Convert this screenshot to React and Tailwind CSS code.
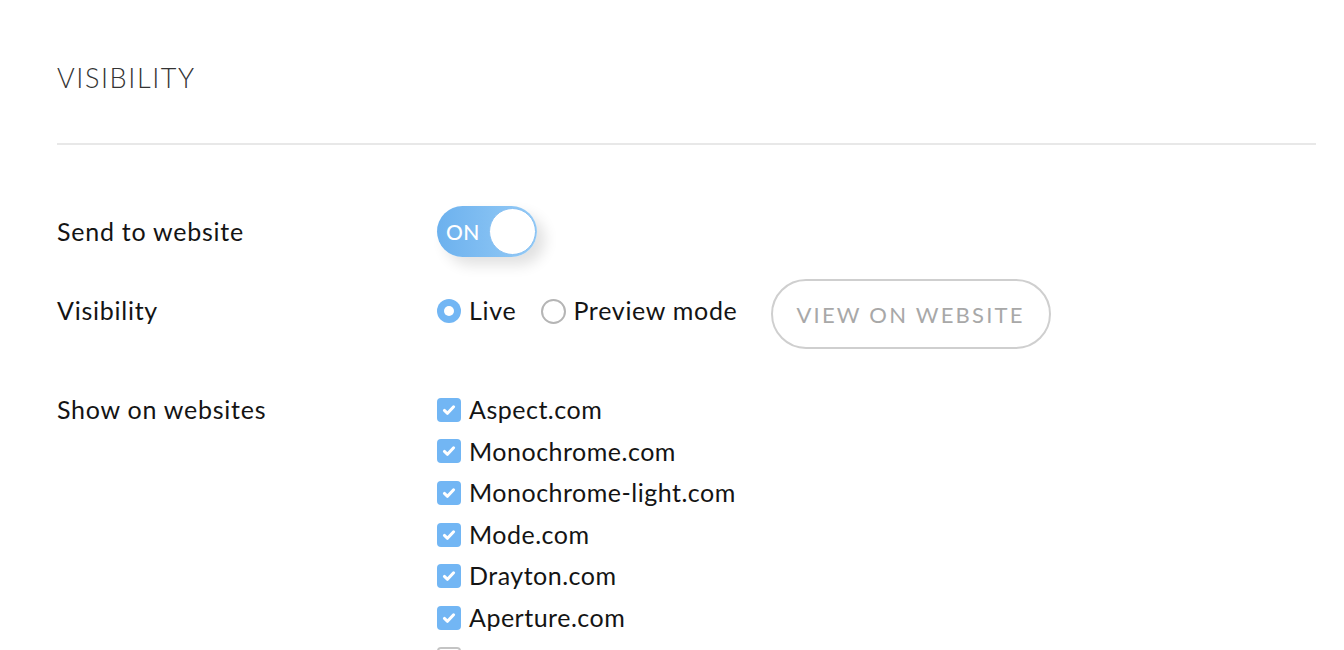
import React from "react";

const sites = [
  { name: "Aspect.com", checked: true },
  { name: "Monochrome.com", checked: true },
  { name: "Monochrome-light.com", checked: true },
  { name: "Mode.com", checked: true },
  { name: "Drayton.com", checked: true },
  { name: "Aperture.com", checked: true },
  { name: "Other.com", checked: false },
];

function Check({ checked }) {
  if (!checked)
    return <span className="w-[24px] h-[24px] rounded-[4px] border-2 border-[#c4c4c4] bg-white shrink-0" />;
  return (
    <span className="w-[24px] h-[24px] rounded-[4px] bg-[#72b6f4] shrink-0 flex items-center justify-center">
      <svg width="16" height="16" viewBox="0 0 16 16" fill="none">
        <path d="M3.4 8.4 L6.5 11.3 L12.6 4.8" stroke="white" strokeWidth="3" strokeLinecap="round" strokeLinejoin="round" />
      </svg>
    </span>
  );
}

export default function App() {
  return (
    <div className="w-[1344px] h-[650px] overflow-hidden bg-white text-[#141414]" style={{ fontFamily: "Lato, 'Noto Sans', sans-serif" }}>
      <div className="pl-[57px] pr-[28px]">
        <div className="h-[145px] border-b-2 border-[#e8e8e8] pt-[61px]">
          <h1 className="text-[27px] leading-[34px] font-light text-[#333] tracking-[1.6px]">VISIBILITY</h1>
        </div>

        <div className="flex items-center mt-[61px] h-[51px]">
          <div className="w-[380px] text-[25px] tracking-[0.75px]">Send to website</div>
          <div className="relative w-[100px] h-[51px] rounded-full bg-gradient-to-r from-[#6cb1ee] to-[#95cbf6] shadow-[8px_8px_14px_rgba(0,0,0,0.12)] flex items-center">
            <span className="pl-[9px] text-white text-[21px] font-medium tracking-[0.5px]">ON</span>
            <span className="absolute right-[1px] top-[2px] w-[47px] h-[47px] rounded-full bg-white border border-[#86bff2]" />
          </div>
        </div>

        <div className="flex items-center mt-[22px] h-[70px]">
          <div className="w-[380px] text-[25px] tracking-[0.75px] -mt-[6px]">Visibility</div>
          <div className="flex items-center -mt-[6px]">
            <span className="w-[24px] h-[24px] rounded-full bg-[#72b6f4] flex items-center justify-center">
              <span className="w-[10px] h-[10px] rounded-full bg-white" />
            </span>
            <span className="ml-[8px] text-[25px] tracking-[0.7px]">Live</span>
            <span className="ml-[25px] w-[25px] h-[25px] rounded-full border-2 border-[#b5b5b5]" />
            <span className="ml-[7px] text-[25px] tracking-[0.7px]">Preview mode</span>
          </div>
          <button className="ml-[33px] w-[280px] h-[70px] rounded-full border-2 border-[#cfcfcf] text-[#a8a8a8] text-[22px] tracking-[2.2px]">
            VIEW ON WEBSITE
          </button>
        </div>

        <div className="flex mt-[40px]">
          <div className="w-[380px] text-[25px] tracking-[0.75px] h-[41.6px] flex items-center">Show on websites</div>
          <div className="flex flex-col">
            {sites.map((s) => (
              <div key={s.name} className="h-[41.6px] flex items-center">
                <Check checked={s.checked} />
                <span className="ml-[8px] text-[25px] tracking-[0.5px]">{s.name}</span>
              </div>
            ))}
          </div>
        </div>
      </div>
    </div>
  );
}
